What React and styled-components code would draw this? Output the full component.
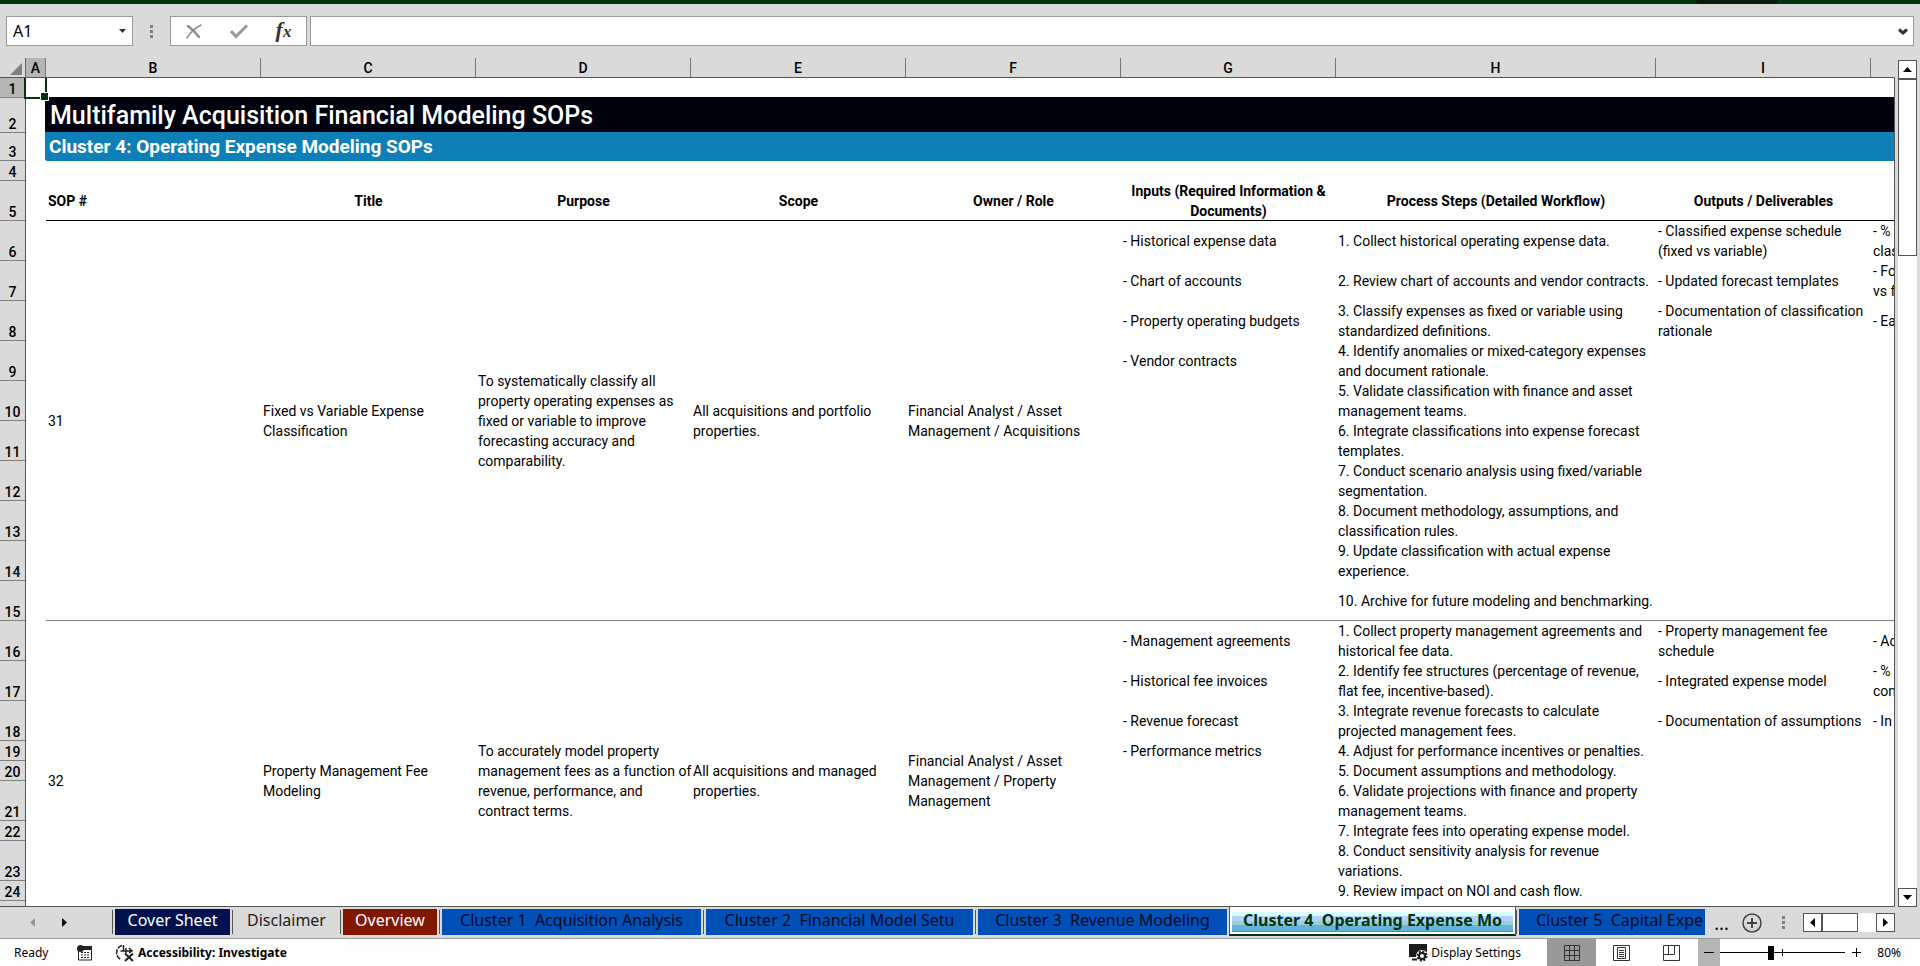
import React from 'react';
import { useState } from 'react';
import styled, { createGlobalStyle, css } from 'styled-components';

const sheetFont = css`Roboto, "Liberation Sans", sans-serif`;
const uiFont = css`"Noto Sans", "Open Sans", sans-serif`;

const GlobalStyle = createGlobalStyle`
    * {
        box-sizing: border-box;
    }
    body {
        margin: 0;
        background: #dadada;
        color: #000;
    }
    button, input {
        font: inherit;
        color: inherit;
        margin: 0;
        padding: 0;
        border: 0;
        border-radius: 0;
        background: none;
    }
    svg {
        display: block;
        flex: none;
    }
`;

const Container = styled.div`
    height: 100vh;
    display: flex;
    flex-direction: column;
    overflow: hidden;
    background: #dadada;
    font-family: ${uiFont};
    font-size: 12px;
`;

/* ---------- top strip and formula bar ---------- */

const TopStrip = styled.div`
    height: 4px;
    flex: none;
    display: flex;
    justify-content: flex-end;
    padding-right: 142px;
    background: #03320f;
`;

const StripShade = styled.span`
    width: 82px;
    height: 4px;
    border-radius: 0 0 6px 6px;
    background: #0a1a0b;
`;

const FormulaBar = styled.div`
    flex: none;
    display: flex;
    align-items: center;
    height: 54px;
    padding: 0 6px;
`;

const Box = styled.div`
    display: flex;
    align-items: center;
    height: 30px;
    border: 1px solid #999;
    background: #fff;
`;

const NameBox = styled(Box)`
    width: 127px;
    input {
        width: 104px;
        padding-left: 6px;
        font-size: 16px;
    }
    button {
        flex: 1;
        height: 100%;
    }
`;

const Dots = styled.span`
    display: grid;
    gap: 2px;
    width: 3px;
    margin: ${(p) => p.$margin};
    i {
        width: 3px;
        height: 3px;
        background: #808080;
    }
`;

const EntryTools = styled(Box)`
    width: 137px;
    margin-right: 3px;
    button {
        flex: 1;
        height: 100%;
        display: flex;
        align-items: center;
        justify-content: center;
    }
`;

const FxLabel = styled.span`
    font: italic bold 22px "Liberation Serif", serif;
    line-height: 24px;
    color: #333;
    small {
        font-size: 17px;
    }
`;

const FormulaBox = styled(Box)`
    flex: 1;
    input {
        flex: 1;
        height: 100%;
        padding: 0 6px;
        font-size: 16px;
    }
    button {
        width: 20px;
        height: 100%;
        display: flex;
        align-items: center;
        justify-content: center;
    }
`;

/* ---------- sheet ---------- */

const SheetArea = styled.div`
    flex: 1;
    min-height: 0;
    display: flex;
`;

const SheetColumn = styled.div`
    flex: 1;
    min-width: 0;
    display: flex;
    flex-direction: column;
`;

const ColumnHeads = styled.div`
    flex: none;
    display: flex;
    height: 20px;
    overflow: hidden;
    border-bottom: 1px solid #555;
    font: 500 14px ${sheetFont};
`;

const Corner = styled.button`
    flex: none;
    width: 26px;
    display: flex;
    align-items: center;
    justify-content: flex-end;
    padding: 2px 3px 0 0;
    border-right: 1px solid #666;
`;

const ColumnHead = styled.div`
    flex: none;
    width: ${(p) => p.$width}px;
    border-right: 1px solid #777;
    line-height: 20px;
    text-align: center;
    background: ${(p) => (p.$active ? '#b5b5b5' : 'transparent')};
`;

const Viewport = styled.div`
    flex: 1;
    min-height: 0;
    position: relative;
    overflow: hidden;
    border-right: 1px solid #555;
    border-bottom: 1px solid #555;
    background: #fff;
`;

const Selection = styled.div`
    position: absolute;
    left: 24px;
    top: -2px;
    width: 23px;
    height: 23px;
    border: 2px solid #03320f;
    &::after {
        content: '';
        position: absolute;
        right: -4px;
        bottom: -4px;
        width: 7px;
        height: 7px;
        border: 1px solid #fff;
        background: #03320f;
    }
`;

const Table = styled.table`
    table-layout: fixed;
    width: 2086px;
    border-collapse: separate;
    border-spacing: 0;
    font: 400 14px ${sheetFont};
    line-height: 20px;
`;

const Row = styled.tr`
    height: ${(p) => p.$height}px;
`;

const RowHead = styled.th`
    padding: 0;
    vertical-align: bottom;
    font-weight: 500;
    line-height: 18px;
    text-align: center;
    background: ${(p) => (p.$active ? '#b5b5b5' : '#dadada')};
    border-right: 1px solid #555;
    box-shadow: inset 0 -1px #808080;
`;

const Cell = styled.td`
    padding: 0 0 0 2px;
    vertical-align: middle;
    white-space: pre;
    box-shadow: ${(p) => (p.$line ? 'inset 0 -1px #808080' : 'none')};
`;

const HeadCell = styled.th`
    padding: ${(p) => (p.$align ? '0 0 0 2px' : '0')};
    font-weight: 700;
    white-space: pre;
    text-align: ${(p) => p.$align || 'center'};
    box-shadow: inset 0 -1px #000;
`;

const TitleCell = styled.td`
    padding: 1px 0 0 4px;
    background: #00020e;
    box-shadow: -1px -1px #00020e;
    color: #fff;
    font-size: 25px;
    font-weight: 500;
    line-height: 34px;
`;

const SubtitleCell = styled.td`
    padding: 0 0 0 3px;
    background: #0f7fb8;
    box-shadow: -1px -1px #0f7fb8;
    color: #fff;
    font-size: 19px;
    font-weight: 700;
    line-height: 26px;
`;

/* ---------- scroll bars ---------- */

const VScroll = styled.div`
    flex: none;
    width: 25px;
    padding: 2px 3px 0 3px;
    display: flex;
    flex-direction: column;
`;

const ScrollButton = styled.button`
    flex: none;
    width: 19px;
    height: 19px;
    display: flex;
    align-items: center;
    justify-content: center;
    border: 1px solid #555;
    background: #fff;
`;

const VTrack = styled.div`
    flex: 1;
    margin-top: -1px;
    background: #fff;
`;

const VThumb = styled.div`
    height: 22%;
    border: 1px solid #555;
    border-top-width: 2px;
    background: #fff;
`;

const HScroll = styled.div`
    width: 92px;
    display: flex;
    margin-right: 25px;
`;

const HTrack = styled.div`
    flex: 1;
    margin-left: -1px;
    background: #fff;
`;

const HThumb = styled.div`
    width: 37px;
    height: 19px;
    border: 1px solid #555;
    border-left-width: 2px;
`;

/* ---------- sheet tabs ---------- */

const TabBar = styled.div`
    flex: none;
    display: flex;
    align-items: center;
    height: 32px;
    border-bottom: 1px solid #999;
`;

const TabNav = styled.div`
    flex: none;
    width: 112px;
    display: flex;
    gap: 20px;
    padding-left: 26px;
    button {
        width: 12px;
        height: 20px;
        display: flex;
        align-items: center;
        justify-content: center;
    }
`;

const Tabs = styled.div`
    flex: 1;
    min-width: 0;
    display: flex;
    align-self: flex-start;
    overflow: hidden;
    height: 31px;
    margin-top: -1px;
`;

const TabSlot = styled.div`
    flex: none;
    width: ${(p) => p.$width}px;
    height: 29px;
    padding: 3px 2px 0 3px;
    background: linear-gradient(#555, #555) 0 4px / 1px 24px no-repeat;
    ${(p) =>
        p.$active &&
        css`
            height: 30px;
            padding: 6px 2px 2px;
            background: #fff;
            border: 1px solid #555;
            border-top: 0;
            border-bottom: 2px solid #03320f;
        `}
`;

const Tab = styled.button`
    display: block;
    width: 100%;
    height: ${(p) => (p.$active ? 20 : 26)}px;
    padding-bottom: 4px;
    overflow: hidden;
    white-space: pre;
    font-size: 16px;
    line-height: ${(p) => (p.$active ? 16 : 22)}px;
    font-weight: ${(p) => (p.$active ? 700 : 400)};
    color: ${(p) => p.$color};
    background: ${(p) => p.$fill};
`;

const More = styled.button`
    width: 33px;
    height: 24px;
    font-size: 18px;
    line-height: 20px;
`;

const AddSheet = styled.button`
    flex: none;
    margin-left: 4px;
`;

/* ---------- status bar ---------- */

const StatusBar = styled.footer`
    flex: none;
    display: flex;
    align-items: center;
    height: 27px;
    padding: 0 19px 0 14px;
    background: #fefefe;
    button {
        height: 100%;
        display: flex;
        align-items: center;
    }
`;

const Ready = styled.span`
    width: 63px;
`;

const MacroButton = styled.button`
    width: 38px;
`;

const AccessButton = styled.button`
    gap: 3px;
    font-weight: 700;
`;

const DisplayButton = styled.button`
    gap: 3px;
    margin-left: auto;
    margin-right: 26px;
`;

const ViewButton = styled.button`
    width: ${(p) => (p.$active ? 49 : 50)}px;
    justify-content: center;
    background: ${(p) => (p.$active ? '#999' : 'none')};
`;

const ZoomOut = styled.button`
    width: 22px;
    margin-left: 2px;
    justify-content: center;
    background: #b5b5b5;
`;

const ZoomRange = styled.input`
    appearance: none;
    width: 125px;
    height: 14px;
    background:
        linear-gradient(#000, #000) 50% 50% / 1px 7px no-repeat,
        linear-gradient(#000, #000) 0 50% / 100% 1px no-repeat;
    &::-webkit-slider-thumb {
        appearance: none;
        width: 6px;
        height: 14px;
        background: #000;
    }
`;

const ZoomIn = styled.button`
    width: 22px;
    justify-content: center;
`;

const ZoomValue = styled.span`
    width: 34px;
    text-align: right;
`;

const columns = [
    { name: 'A', width: 20 },
    { name: 'B', width: 215 },
    { name: 'C', width: 215 },
    { name: 'D', width: 215 },
    { name: 'E', width: 215 },
    { name: 'F', width: 215 },
    { name: 'G', width: 215 },
    { name: 'H', width: 320 },
    { name: 'I', width: 215 },
];

const headings = [
    'Title',
    'Purpose',
    'Scope',
    'Owner / Role',
    'Inputs (Required Information &\nDocuments)',
    'Process Steps (Detailed Workflow)',
    'Outputs / Deliverables',
    '',
];

// each row: height, inputs, process step, output, next column
const sops = [
    {
        first: 6,
        merged: [
            '31',
            'Fixed vs Variable Expense\nClassification',
            'To systematically classify all\nproperty operating expenses as\nfixed or variable to improve\nforecasting accuracy and\ncomparability.',
            'All acquisitions and portfolio\nproperties.',
            'Financial Analyst / Asset\nManagement / Acquisitions',
        ],
        rows: [
            [40, '- Historical expense data', '1. Collect historical operating expense data.', '- Classified expense schedule\n(fixed vs variable)', '- %\nclas'],
            [40, '- Chart of accounts', '2. Review chart of accounts and vendor contracts.', '- Updated forecast templates', '- Fo\nvs f'],
            [40, '- Property operating budgets', '3. Classify expenses as fixed or variable using\nstandardized definitions.', '- Documentation of classification\nrationale', '- Ea'],
            [40, '- Vendor contracts', '4. Identify anomalies or mixed-category expenses\nand document rationale.'],
            [40, '', '5. Validate classification with finance and asset\nmanagement teams.'],
            [40, '', '6. Integrate classifications into expense forecast\ntemplates.'],
            [40, '', '7. Conduct scenario analysis using fixed/variable\nsegmentation.'],
            [40, '', '8. Document methodology, assumptions, and\nclassification rules.'],
            [40, '', '9. Update classification with actual expense\nexperience.'],
            [40, '', '10. Archive for future modeling and benchmarking.'],
        ],
    },
    {
        first: 16,
        merged: [
            '32',
            'Property Management Fee\nModeling',
            'To accurately model property\nmanagement fees as a function of\nrevenue, performance, and\ncontract terms.',
            'All acquisitions and managed\nproperties.',
            'Financial Analyst / Asset\nManagement / Property\nManagement',
        ],
        rows: [
            [40, '- Management agreements', '1. Collect property management agreements and\nhistorical fee data.', '- Property management fee\nschedule', '- Ac'],
            [40, '- Historical fee invoices', '2. Identify fee structures (percentage of revenue,\nflat fee, incentive-based).', '- Integrated expense model', '- %\ncon'],
            [40, '- Revenue forecast', '3. Integrate revenue forecasts to calculate\nprojected management fees.', '- Documentation of assumptions', '- In'],
            [20, '- Performance metrics', '4. Adjust for performance incentives or penalties.'],
            [20, '', '5. Document assumptions and methodology.'],
            [40, '', '6. Validate projections with finance and property\nmanagement teams.'],
            [20, '', '7. Integrate fees into operating expense model.'],
            [40, '', '8. Conduct sensitivity analysis for revenue\nvariations.'],
            [20, '', '9. Review impact on NOI and cash flow.'],
            [40, '', ''],
        ],
    },
];

const activeFill =
    'linear-gradient(#d7ffff 0 4px, #b2d2ff 4px 9px, #96d2d2 9px 13px, #64b4dc 13px 19px, #2f93cc 19px)';

const tabs = [
    { name: 'Cover Sheet', width: 120, color: '#fff', fill: '#03124f' },
    { name: 'Disclaimer', width: 108, color: '#222', fill: 'none' },
    { name: 'Overview', width: 99, color: '#fff', fill: '#801800' },
    { name: 'Cluster 1  Acquisition Analysis', width: 264, color: '#000a1c', fill: '#0050b8' },
    { name: 'Cluster 2  Financial Model Setu', width: 272, color: '#000a1c', fill: '#0050b8' },
    { name: 'Cluster 3  Revenue Modeling', width: 254, color: '#000a1c', fill: '#0050b8' },
    { name: 'Cluster 4  Operating Expense Mo', width: 287, color: '#03320f', fill: activeFill },
    { name: 'Cluster 5  Capital Expe', width: 206, color: '#000a1c', fill: '#0050b8' },
];

const arrows = {
    up: 'M0 5L4.5 0L9 5Z',
    down: 'M0 0L9 0L4.5 5Z',
    left: 'M5 0L5 9L0 4.5Z',
    right: 'M0 0L5 4.5L0 9Z',
};

const Arrow = ({ to, color = '#000' }) => {
    const tall = to === 'left' || to === 'right';
    return (
        <svg width={tall ? 5 : 9} height={tall ? 9 : 5} viewBox={tall ? '0 0 5 9' : '0 0 9 5'}>
            <path d={arrows[to]} fill={color} />
        </svg>
    );
};

const SopRows = ({ sop }) =>
    sop.rows.map(([height, ...texts], i) => {
        const last = i === sop.rows.length - 1;
        return (
            <Row key={i} $height={height}>
                <RowHead scope="row">{sop.first + i}</RowHead>
                <Cell />
                {i === 0 &&
                    sop.merged.map((text) => (
                        <Cell key={text} rowSpan={sop.rows.length} $line>{text}</Cell>
                    ))}
                {[0, 1, 2, 3].map((c) => (
                    <Cell key={c} $line={last}>{texts[c]}</Cell>
                ))}
            </Row>
        );
    });

const Sheet = () => (
    <Table>
        <colgroup>
            <col style={{ width: 26 }} />
            {columns.map((col) => <col key={col.name} style={{ width: col.width }} />)}
            <col />
        </colgroup>
        <tbody>
            <Row $height={20}>
                <RowHead scope="row" $active>1</RowHead>
                <Cell colSpan={10} />
            </Row>
            <Row $height={35}>
                <RowHead scope="row">2</RowHead>
                <Cell />
                <TitleCell colSpan={9}>Multifamily Acquisition Financial Modeling SOPs</TitleCell>
            </Row>
            <Row $height={28}>
                <RowHead scope="row">3</RowHead>
                <Cell />
                <SubtitleCell colSpan={9}>Cluster 4: Operating Expense Modeling SOPs</SubtitleCell>
            </Row>
            <Row $height={20}>
                <RowHead scope="row">4</RowHead>
                <Cell colSpan={10} />
            </Row>
            <Row $height={40}>
                <RowHead scope="row">5</RowHead>
                <Cell />
                <HeadCell scope="col" $align="left">SOP #</HeadCell>
                {headings.map((text) => <HeadCell key={text} scope="col">{text}</HeadCell>)}
            </Row>
            {sops.map((sop) => <SopRows key={sop.first} sop={sop} />)}
        </tbody>
    </Table>
);

const App = () => {
    const [active, setActive] = useState(6);
    const [zoom, setZoom] = useState(80);

    return (
        <Container>
            <GlobalStyle />
            <TopStrip><StripShade /></TopStrip>
            <FormulaBar>
                <NameBox>
                    <input aria-label="Name box" defaultValue="A1" />
                    <button aria-label="Named ranges">
                        <svg width="20" height="28" viewBox="0 0 20 28">
                            <path d="M8 12h7l-3.5 4z" fill="#333" />
                        </svg>
                    </button>
                </NameBox>
                <Dots $margin="0 17px"><i /><i /><i /></Dots>
                <EntryTools>
                    <button aria-label="Cancel">
                        <svg width="16" height="15" viewBox="0 0 16 15" fill="none" stroke="#8c8c8c" strokeLinecap="round">
                            <path d="M2 2c4 3 8 7 11 11" strokeWidth="2.5" />
                            <path d="M15 1C9 4 4 9 1 14" strokeWidth="1.5" />
                        </svg>
                    </button>
                    <button aria-label="Enter">
                        <svg width="18" height="15" viewBox="0 0 18 15" fill="none" stroke="#999">
                            <path d="M1 7l5 5.5L17 1.5" strokeWidth="3" />
                        </svg>
                    </button>
                    <button aria-label="Insert function"><FxLabel>f<small>x</small></FxLabel></button>
                </EntryTools>
                <FormulaBox>
                    <input aria-label="Formula" />
                    <button aria-label="Expand formula bar">
                        <svg width="10" height="7" viewBox="0 0 10 7" fill="none" stroke="#333" strokeWidth="3">
                            <path d="M1 1.5l4 3.5 4-3.5" />
                        </svg>
                    </button>
                </FormulaBox>
            </FormulaBar>

            <SheetArea>
                <SheetColumn>
                    <ColumnHeads>
                        <Corner aria-label="Select all">
                            <svg width="12" height="12" viewBox="0 0 12 12"><path d="M12 0v12H0z" fill="#808080" /></svg>
                        </Corner>
                        {columns.map((col) => (
                            <ColumnHead key={col.name} $width={col.width} $active={col.name === 'A'}>
                                {col.name}
                            </ColumnHead>
                        ))}
                    </ColumnHeads>
                    <Viewport>
                        <Sheet />
                        <Selection />
                    </Viewport>
                </SheetColumn>
                <VScroll>
                    <ScrollButton aria-label="Scroll up"><Arrow to="up" /></ScrollButton>
                    <VTrack><VThumb /></VTrack>
                    <ScrollButton aria-label="Scroll down"><Arrow to="down" /></ScrollButton>
                </VScroll>
            </SheetArea>

            <TabBar>
                <TabNav>
                    <button aria-label="Previous sheets"><Arrow to="left" color="#999" /></button>
                    <button aria-label="Next sheets"><Arrow to="right" color="#031a08" /></button>
                </TabNav>
                <Tabs>
                    {tabs.map((tab, i) => (
                        <TabSlot key={tab.name} $width={tab.width} $active={i === active}>
                            <Tab
                                $active={i === active}
                                $color={tab.color}
                                $fill={tab.fill}
                                onClick={() => setActive(i)}
                            >
                                {tab.name}
                            </Tab>
                        </TabSlot>
                    ))}
                </Tabs>
                <More aria-label="More sheets">...</More>
                <AddSheet aria-label="New sheet">
                    <svg width="20" height="20" viewBox="0 0 20 20" fill="none" stroke="#444">
                        <circle cx="10" cy="10" r="9" strokeWidth="1.5" />
                        <path d="M5 10h10M10 5v10" strokeWidth="2" />
                    </svg>
                </AddSheet>
                <Dots $margin="0 18px 0 20px"><i /><i /><i /></Dots>
                <HScroll>
                    <ScrollButton aria-label="Scroll left"><Arrow to="left" /></ScrollButton>
                    <HTrack><HThumb /></HTrack>
                    <ScrollButton aria-label="Scroll right"><Arrow to="right" /></ScrollButton>
                </HScroll>
            </TabBar>

            <StatusBar>
                <Ready>Ready</Ready>
                <MacroButton aria-label="Record macro">
                    <svg width="16" height="16" viewBox="0 0 16 16">
                        <path d="M1.5 6v9h13V1.5H7" fill="none" stroke="#222" />
                        <path d="M6 1h9v4H6z" fill="#222" />
                        <circle cx="3.5" cy="3.5" r="3.5" fill="#222" />
                        <path d="M4 7.500h9M4 10h9M4 12.500h9" stroke="#222" strokeDasharray="2 1" />
                    </svg>
                </MacroButton>
                <AccessButton>
                    <svg width="20" height="18" viewBox="0 0 20 18" fill="none" stroke="#222">
                        <path d="M7 1.5A7.500 7.500 0 0 0 6 15.5" strokeWidth="1.5" strokeDasharray="5 1" />
                        <path d="M8.500 1v6M5.500 7h11M14 4l3 3-3 2M11 4v5" strokeWidth="1.5" />
                        <path d="M10 9.500l8 7.500M18 9.500L10 17" strokeWidth="2" />
                    </svg>
                    Accessibility: Investigate
                </AccessButton>
                <DisplayButton>
                    <svg width="19" height="19" viewBox="0 0 19 19">
                        <path d="M0 1h18v9H9l-2 4H0z" fill="#1c1c1c" />
                        <path d="M3 16.500h5" stroke="#1c1c1c" strokeWidth="2" />
                        <circle cx="13" cy="13" r="6" fill="#fff" />
                        <circle cx="13" cy="13" r="4.500" fill="none" stroke="#1c1c1c" strokeWidth="2" strokeDasharray="2 1.500" />
                        <circle cx="13" cy="13" r="3" fill="none" stroke="#1c1c1c" strokeWidth="2" />
                    </svg>
                    Display Settings
                </DisplayButton>
                <ViewButton $active aria-label="Normal view">
                    <svg width="16" height="16" viewBox="0 0 16 16" fill="none" stroke="#333">
                        <path d="M.5.5h15v15H.5zM5.5 0v16M10.5 0v16M0 5.5h16M0 10.5h16" />
                    </svg>
                </ViewButton>
                <ViewButton aria-label="Page layout view">
                    <svg width="17" height="16" viewBox="0 0 17 16" fill="none" stroke="#333">
                        <path d="M.5.5h16v15H.5zM4.5 2.5h8v11h-8zM6 5.5h5M6 7.5h5M6 9.5h5M6 11.5h5" />
                    </svg>
                </ViewButton>
                <ViewButton aria-label="Page break preview">
                    <svg width="17" height="16" viewBox="0 0 17 16" fill="none" stroke="#333">
                        <path d="M.5.5h16v15H.5zM0 9.5h11.5V0M5.5 0v9.5" />
                    </svg>
                </ViewButton>
                <ZoomOut aria-label="Zoom out" onClick={() => setZoom(zoom - 10)}>
                    <svg width="10" height="1" viewBox="0 0 10 1"><path d="M0 .5h10" stroke="#000" /></svg>
                </ZoomOut>
                <ZoomRange
                    type="range"
                    aria-label="Zoom"
                    min="0"
                    max="200"
                    value={zoom}
                    onChange={(e) => setZoom(Number(e.target.value))}
                />
                <ZoomIn aria-label="Zoom in" onClick={() => setZoom(zoom + 10)}>
                    <svg width="9" height="9" viewBox="0 0 9 9"><path d="M0 4.5h9M4.5 0v9" stroke="#000" /></svg>
                </ZoomIn>
                <ZoomValue>{zoom}%</ZoomValue>
            </StatusBar>
        </Container>
    );
};

export default App;
